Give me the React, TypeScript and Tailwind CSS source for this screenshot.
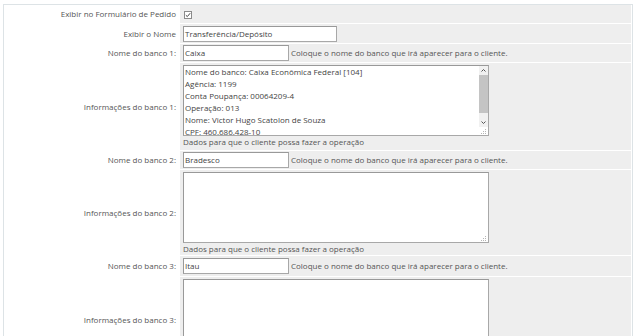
import React from "react";

const font = { fontFamily: '"Open Sans", "Liberation Sans", sans-serif' };

function Grip() {
  return (
    <svg width="6" height="6" viewBox="0 0 6 6" className="absolute right-[1px] bottom-[1px]">
      <rect x="4" y="1" width="1" height="1" fill="#b5b5b5" />
      <rect x="4" y="3" width="1" height="1" fill="#b5b5b5" />
      <rect x="2" y="3" width="1" height="1" fill="#b5b5b5" />
      <rect x="4" y="5" width="1" height="1" fill="#b5b5b5" />
      <rect x="2" y="5" width="1" height="1" fill="#b5b5b5" />
      <rect x="0" y="5" width="1" height="1" fill="#b5b5b5" />
    </svg>
  );
}

function Row({ label, h, children, top = false }: { label: string; h: number; children: React.ReactNode; top?: boolean }) {
  return (
    <div className="flex" style={{ height: h }}>
      <div className="w-[176px] shrink-0 bg-white flex items-center justify-end pr-[4px] text-[8px] text-[#555]">
        {label}
      </div>
      <div className={`flex-1 bg-[#eeeeee] flex ${top ? "flex-col justify-start" : "items-center"} pl-[3px]`}>
        {children}
      </div>
    </div>
  );
}

function Input({ w, value }: { w: number; value: string }) {
  return (
    <div
      className="h-[16px] bg-white border border-[#a8a8a8] border-t-[#999] border-l-[#999] flex items-center px-[1px] text-[8px] text-[#444] shrink-0"
      style={{ width: w }}
    >
      {value}
    </div>
  );
}

function Help({ children }: { children: React.ReactNode }) {
  return <span className="text-[8px] text-[#555] ml-[2px] whitespace-nowrap">{children}</span>;
}

function TextArea({ lines, scroll = false }: { lines: string[]; scroll?: boolean }) {
  return (
    <div className="relative w-[306px] h-[71px] bg-white border border-[#a8a8a8] border-t-[#999] border-l-[#999] overflow-hidden shrink-0">
      <div className="px-[1px] text-[8px] leading-[12px] text-[#444]">
        {lines.map((l, i) => (
          <div key={i} className="whitespace-nowrap">{l}</div>
        ))}
      </div>
      {scroll && (
        <div className="absolute right-0 top-0 w-[9px] h-[61px] bg-[#f1f1f1] flex flex-col items-center">
          <svg width="9" height="9" viewBox="0 0 9 9">
            <path d="M2.5 5.5 L4.5 3.5 L6.5 5.5" stroke="#555" strokeWidth="1" fill="none" />
          </svg>
          <div className="w-[9px] h-[38px] bg-[#c4c4c4]" />
          <div className="flex-1" />
          <svg width="9" height="9" viewBox="0 0 9 9">
            <path d="M2.5 3.5 L4.5 5.5 L6.5 3.5" stroke="#555" strokeWidth="1" fill="none" />
          </svg>
        </div>
      )}
      <Grip />
    </div>
  );
}

export default function App() {
  return (
    <div className="bg-white w-[640px] h-[336px] overflow-hidden pt-[4px] pl-[3px]" style={font}>
      <div className="w-[630px] border border-[#dde3e6] pr-px flex flex-col gap-px bg-white h-[360px]">
        <Row label="Exibir no Formulário de Pedido" h={18}>
          <svg width="8" height="8" viewBox="0 0 8 8" className="ml-[1px] mt-[1px]">
            <rect x="0.5" y="0.5" width="7" height="7" fill="#fff" stroke="#8a8a8a" />
            <path d="M1.8 4.2 L3.3 5.6 L6.2 2.2" stroke="#444" strokeWidth="1" fill="none" />
          </svg>
        </Row>
        <Row label="Exibir o Nome" h={19}>
          <Input w={154} value="Transferência/Depósito" />
        </Row>
        <Row label="Nome do banco 1:" h={18}>
          <Input w={106} value="Caixa" />
          <Help>Coloque o nome do banco que irá aparecer para o cliente.</Help>
        </Row>
        <Row label="Informações do banco 1:" h={87} top>
          <div className="pt-[2px]">
            <TextArea
              scroll
              lines={[
                "Nome do banco: Caixa Econômica Federal [104]",
                "Agência: 1199",
                "Conta Poupança: 00064209-4",
                "Operação: 013",
                "Nome: Victor Hugo Scatolon de Souza",
                "CPF: 460.686.428-10",
              ]}
            />
            <div className="text-[8px] leading-[12px] text-[#555]">Dados para que o cliente possa fazer a operação</div>
          </div>
        </Row>
        <Row label="Nome do banco 2:" h={18}>
          <Input w={106} value="Bradesco" />
          <Help>Coloque o nome do banco que irá aparecer para o cliente.</Help>
        </Row>
        <Row label="Informações do banco 2:" h={85} top>
          <div className="pt-[2px]">
            <TextArea lines={[]} />
            <div className="text-[8px] leading-[12px] text-[#555]">Dados para que o cliente possa fazer a operação</div>
          </div>
        </Row>
        <Row label="Nome do banco 3:" h={20}>
          <Input w={106} value="Itau" />
          <Help>Coloque o nome do banco que irá aparecer para o cliente.</Help>
        </Row>
        <Row label="Informações do banco 3:" h={85} top>
          <div className="pt-[2px]">
            <TextArea lines={[]} />
          </div>
        </Row>
      </div>
    </div>
  );
}
